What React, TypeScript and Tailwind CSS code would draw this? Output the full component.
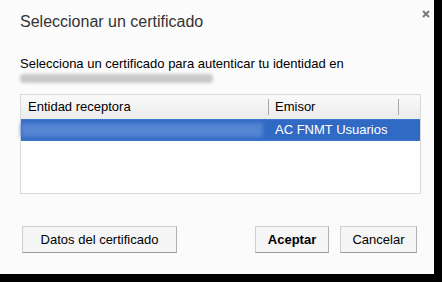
export default function App() {
  return (
    <div className="w-[442px] h-[282px] bg-black" style={{ fontFamily: '"Liberation Sans", Arial, sans-serif' }}>
      <div className="relative w-[434px] h-[274px] bg-[#fbfbfb] flex flex-col">
        <button className="absolute left-[422px] top-[10px]">
          <svg width="8" height="8" viewBox="0 0 8 8">
            <path d="M1 1L7 7M7 1L1 7" stroke="#7a7a7a" strokeWidth="2" />
          </svg>
        </button>

        <h1 className="pl-5 pt-[12px] text-[16px] leading-5 text-[#333]">Seleccionar un certificado</h1>

        <p className="pl-5 mt-[24px] text-[13px] leading-[15px] text-black">
          Selecciona un certificado para autenticar tu identidad en
        </p>
        <div className="ml-5 mt-[3px] h-[9px] w-[193px] rounded-sm bg-[#c9c9c9] blur-[1.5px]" />

        <div className="ml-5 mt-[11px] w-[401px] h-[100px] border border-[#d9d9d9] bg-white flex flex-col">
          <div className="h-[24px] flex items-center bg-gradient-to-b from-[#fafafa] to-[#ececec] text-[13px] text-black">
            <div className="w-[248px] pl-[7px] border-r border-[#a8a8a8] h-[16px] leading-[16px]">Entidad receptora</div>
            <div className="w-[130px] pl-[6px] border-r border-[#a8a8a8] h-[16px] leading-[16px]">Emisor</div>
          </div>
          <div className="h-[22px] flex items-center bg-[#316ac5] border-y border-dotted border-[#8a7a55] text-[13px] text-white">
            <div className="w-[248px] h-full flex items-center">
              <div className="h-[14px] w-[242px] bg-[#5686d2] blur-[2px]" />
            </div>
            <div className="pl-[6px]">AC FNMT Usuarios</div>
          </div>
        </div>

        <div className="mt-[32px] pl-[22px] pr-[17px] flex items-center text-[13px] text-black">
          <button className="w-[155px] h-[27px] bg-[#f5f5f5] border border-[#cfcfcf] border-b-[#9a9a9a] border-r-[#b0b0b0]">
            Datos del certificado
          </button>
          <button className="ml-auto w-[74px] h-[27px] bg-[#f5f5f5] border border-[#cfcfcf] border-b-[#9a9a9a] border-r-[#b0b0b0] font-bold">
            Aceptar
          </button>
          <button className="ml-[11px] w-[77px] h-[27px] bg-[#f5f5f5] border border-[#cfcfcf] border-b-[#9a9a9a] border-r-[#b0b0b0]">
            Cancelar
          </button>
        </div>
      </div>
    </div>
  );
}
